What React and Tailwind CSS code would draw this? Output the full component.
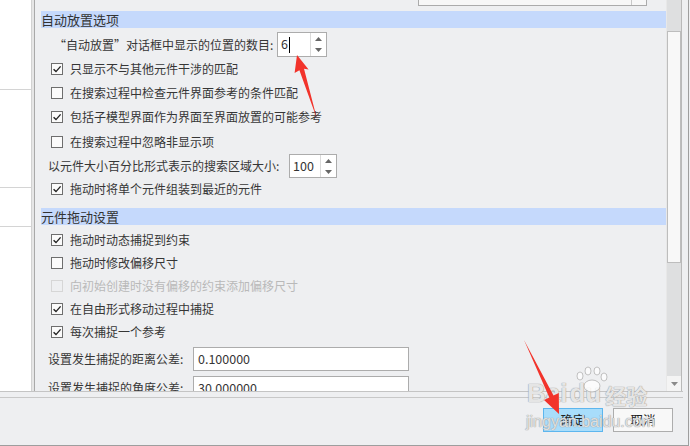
import React from "react";

function Check({ checked, disabled }) {
  return (
    <span
      className={
        "w-[12px] h-[12px] shrink-0 border flex items-center justify-center " +
        (disabled ? "border-[#d6d6d6] bg-transparent" : "border-[#6e6e6e] bg-[#fbfbfb]")
      }
    >
      {checked && (
        <svg width="10" height="10" viewBox="0 0 10 10">
          <path d="M1.6 5.2 L4 7.6 L8.6 2.4" fill="none" stroke="#222" strokeWidth="1.4" />
        </svg>
      )}
    </span>
  );
}

function CheckRow({ label, checked, disabled, h }) {
  return (
    <div className={"flex items-center shrink-0 ml-[10px] " + h}>
      <Check checked={checked} disabled={disabled} />
      <span className={"ml-[7px] whitespace-nowrap leading-none " + (disabled ? "text-[#b9b9b9]" : "")}>
        {label}
      </span>
    </div>
  );
}

function Spin({ value, w, h, cursor }) {
  return (
    <div className={"flex shrink-0 bg-white border border-[#acacac] " + w + " " + h}>
      <div className="flex-1 flex items-center pl-[3px] text-[12.5px] leading-none text-[#333]">
        <span>{value}</span>
        {cursor && <span className="w-px h-[16px] bg-black ml-[1px]" />}
      </div>
      <div className="w-[16px] border-l border-[#dadada] flex flex-col">
        <div className="flex-1 flex items-center justify-center">
          <svg width="7" height="4" viewBox="0 0 7 4">
            <path d="M0 4 L3.5 0 L7 4 Z" fill="#666" />
          </svg>
        </div>
        <div className="flex-1 flex items-center justify-center">
          <svg width="7" height="4" viewBox="0 0 7 4">
            <path d="M0 0 L3.5 4 L7 0 Z" fill="#666" />
          </svg>
        </div>
      </div>
    </div>
  );
}

export default function App() {
  return (
    <div className="relative w-[690px] h-[446px] overflow-hidden bg-[#eeeff1] font-['Noto_Sans_CJK_SC','Microsoft_YaHei',sans-serif] text-[12px] text-[#363636]">
      <div className="w-[689px] h-[446px] border-r border-b border-[#9e9e9e] flex flex-col">
        {/* top area */}
        <div className="w-[683px] h-[392px] flex border-b border-[#c4c4c4] shrink-0">
          {/* left panel */}
          <div className="w-[32px] shrink-0 bg-white border-r border-[#d2d2d2] flex flex-col">
            <div className="h-[90px] shrink-0 border-b border-[#d4d4d4]" />
            <div className="h-[98px] shrink-0 border-b border-[#d4d4d4]" />
            <div className="h-[39px] shrink-0 border-b border-[#d4d4d4]" />
          </div>
          <div className="w-[2px] shrink-0 bg-[#e6e6e6]" />
          {/* main content */}
          <div className="w-[632px] shrink-0 border-l border-[#a9a9a9] pl-[6px] overflow-hidden flex flex-col">
            <div className="h-[6px] w-[229px] ml-[377px] shrink-0 border-x border-b border-[#ababab] bg-[#f7f7f7] flex justify-end">
              <div className="w-[15px] border-l border-[#c8c8c8]" />
            </div>
            <div className="mt-[5px] h-[17px] shrink-0 bg-[#c5d9fc] flex items-center text-[13px] leading-none text-[#333]">
              自动放置选项
            </div>
            <div className="mt-[4px] h-[25px] shrink-0 flex items-center ml-[13px]">
              <span className="w-[223px] shrink-0 whitespace-nowrap leading-none">“自动放置”对话框中显示的位置的数目:</span>
              <Spin value="6" w="w-[50px]" h="h-[25px]" cursor />
            </div>
            <CheckRow h="h-[24px]" checked label="只显示不与其他元件干涉的匹配" />
            <CheckRow h="h-[24px]" label="在搜索过程中检查元件界面参考的条件匹配" />
            <CheckRow h="h-[24px]" checked label="包括子模型界面作为界面至界面放置的可能参考" />
            <CheckRow h="h-[25px]" label="在搜索过程中忽略非显示项" />
            <div className="h-[24px] shrink-0 flex items-center ml-[7px]">
              <span className="w-[241px] shrink-0 whitespace-nowrap leading-none">以元件大小百分比形式表示的搜索区域大小:</span>
              <Spin value="100" w="w-[48px]" h="h-[24px]" />
            </div>
            <CheckRow h="h-[22px]" checked label="拖动时将单个元件组装到最近的元件" />
            <div className="mt-[8px] h-[17px] shrink-0 bg-[#c5d9fc] flex items-center text-[13px] leading-none text-[#333]">
              元件拖动设置
            </div>
            <div className="mt-[3px] shrink-0" />
            <CheckRow h="h-[23px]" checked label="拖动时动态捕捉到约束" />
            <CheckRow h="h-[23px]" label="拖动时修改偏移尺寸" />
            <CheckRow h="h-[23px]" disabled label="向初始创建时没有偏移的约束添加偏移尺寸" />
            <CheckRow h="h-[23px]" checked label="在自由形式移动过程中捕捉" />
            <CheckRow h="h-[23px]" checked label="每次捕捉一个参考" />
            <div className="mt-[4px] h-[24px] shrink-0 flex items-center ml-[7px]">
              <span className="w-[145px] shrink-0 whitespace-nowrap leading-none">设置发生捕捉的距离公差:</span>
              <div className="w-[216px] h-[24px] bg-white border border-[#acacac] flex items-center pl-[4px] text-[12.5px] leading-none">0.100000</div>
            </div>
            <div className="mt-[5px] h-[24px] shrink-0 flex items-center ml-[7px]">
              <span className="w-[145px] shrink-0 whitespace-nowrap leading-none">设置发生捕捉的角度公差:</span>
              <div className="w-[216px] h-[24px] bg-white border border-[#acacac] flex items-center pl-[4px] text-[12.5px] leading-none">30.000000</div>
            </div>
          </div>
          {/* scrollbar */}
          <div className="w-[16px] shrink-0 bg-[#dedfe0] border-l border-[#e8e8e8] border-r border-r-[#b9b9b9] flex flex-col">
            <div className="h-[31px] shrink-0" />
            <div className="h-[232px] shrink-0 bg-[#f8f8f8] border border-[#bdbdbd]" />
            <div className="flex-1" />
            <div className="h-[15px] shrink-0 bg-[#f4f4f4] flex items-center justify-center">
              <svg width="7" height="4" viewBox="0 0 7 4">
                <path d="M0 0 L3.5 4 L7 0 Z" fill="#8a8a8a" />
              </svg>
            </div>
          </div>
        </div>
        <div className="mt-[5px] w-[683px] h-px bg-[#c8c8c8] shrink-0" />
        <div className="mt-[10px] flex justify-end gap-[10px] pr-[15px]">
          <button className="w-[60px] h-[24px] bg-[#a8ddfb] border border-[#5db6ee] flex items-center justify-center text-[12.5px] leading-none text-[#222]">
            确定
          </button>
          <button className="w-[60px] h-[24px] bg-[#f8f8f8] border border-[#adadad] flex items-center justify-center text-[12.5px] leading-none text-[#222]">
            取消
          </button>
        </div>
      </div>

      {/* watermark */}
      <div className="absolute left-[527px] top-[380px] flex items-end leading-none text-white/75 font-['Liberation_Sans',sans-serif] font-bold text-[26px] [text-shadow:0_0_1px_#9a9a9a,0_0_1px_#9a9a9a]">
        <span>Bai</span>
        <span className="ml-[2px]">du</span>
        <span className="ml-[4px] font-['Noto_Sans_CJK_SC',sans-serif] text-[21px]">经验</span>
      </div>
      <div className="absolute left-[526px] top-[414px] leading-none text-white/70 font-['Liberation_Sans',sans-serif] text-[16px] [text-shadow:0_0_1px_#9a9a9a,0_0_1px_#9a9a9a]">
        jingyan.baidu.com
      </div>
      <svg className="absolute left-0 top-0 pointer-events-none" width="690" height="446" viewBox="0 0 690 446">
        <g fill="#ffffff" fillOpacity="0.75" stroke="#a0a0a0" strokeWidth="0.8" strokeOpacity="0.8">
          <ellipse cx="580" cy="376" rx="3" ry="4" />
          <ellipse cx="588" cy="371" rx="3" ry="4" />
          <ellipse cx="597" cy="371" rx="3" ry="4" />
          <ellipse cx="604" cy="377" rx="3" ry="4" />
          <ellipse cx="592" cy="386" rx="8" ry="6" />
        </g>
        <polygon
          points="297,55 294.6,73 299.4,70.2 317,119 304,68.8 308.6,69.6"
          fill="#f2332b"
        />
        <polygon
          points="559,414 544,400 549.3,397.6 524,340 553.5,395.6 558.8,393"
          fill="#f2332b"
        />
      </svg>
    </div>
  );
}
